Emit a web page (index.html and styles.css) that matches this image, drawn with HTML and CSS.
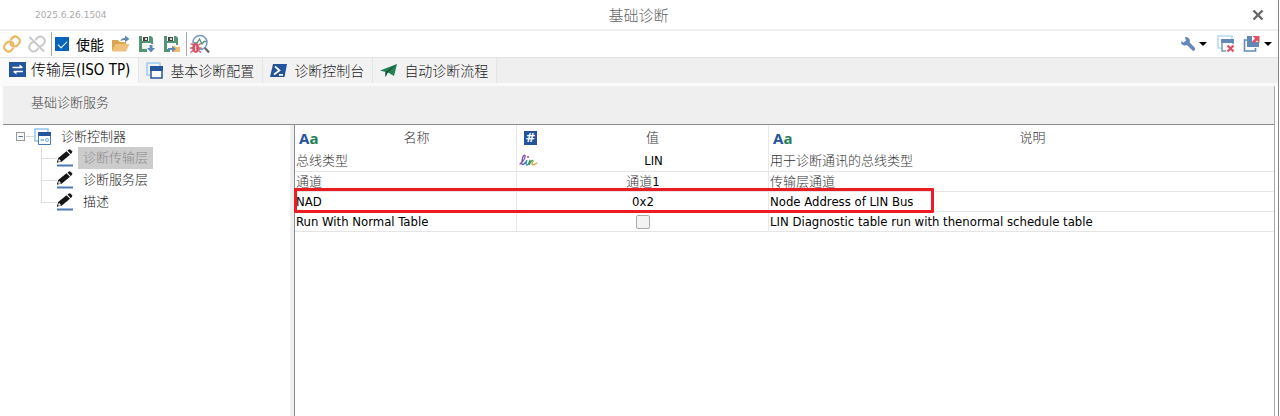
FILE: index.html
```html
<!DOCTYPE html>
<html lang="zh-CN">
<head>
<meta charset="utf-8">
<title>基础诊断</title>
<link rel="stylesheet" href="styles.css">
</head>
<body>
<svg class="defs" aria-hidden="true">
  <symbol id="pencil" viewBox="0 0 18 18">
    <path d="M1 13.500 2.200 9 10.500 2.200 14 5.800 5.600 12.800Z" fill="#151515"/>
    <path d="M11.500 1.600 13 .4Q14 0 15 1L16 2.200Q16.500 3.200 15.600 4.200L14.600 5.100Z" fill="#151515"/>
    <path d="M2.900 9.700 5.200 12.200 2 13Z" fill="#fff"/>
    <path d="M1 13.500 1.500 11.700 2.700 13Z" fill="#151515"/>
    <path d="M1 16.500H17" stroke="#4a79b5" stroke-width="2"/>
  </symbol>
</svg>
<div class="window">
  <header class="titlebar">
    <span class="version">2025.6.26.1504</span>
    <h1 class="title">基础诊断</h1>
    <button class="close" aria-label="关闭"><svg width="12" height="12" viewBox="0 0 12 12"><path d="M1.500 1.500 10.500 10.500M10.500 1.500 1.500 10.500" stroke="#666" stroke-width="2.400"/></svg></button>
  </header>

  <div class="toolbar">
    <button class="tool" aria-label="连接"><svg width="18" height="18" viewBox="0 0 18 18" fill="none" stroke="#ebb65e" stroke-width="2.100" stroke-linecap="round"><path d="M8 4.500Q10.500 .300 14 1.800 18.500 4.500 16 8.500 13.500 12.500 9.500 11.200 6.500 9.500 8 7.500"/><path d="M10 13.500Q7.500 17.700 4 16.200-.500 13.500 2 9.500 4.500 5.500 8.500 6.800 11.500 8.500 10 10.500"/></svg></button>
    <button class="tool" aria-label="断开"><svg width="18" height="18" viewBox="0 0 18 18" fill="none" stroke="#c9c9c9" stroke-width="2" stroke-linecap="round"><path d="M8 4.500Q10.500 .500 14 1.800 18.500 4.500 16 8.500 14.500 10.800 12.500 11"/><path d="M10 13.500Q7.500 17.500 4 16.200-.500 13.500 2 9.500 3.500 7.200 5.500 7M2 2.500 15.500 16"/></svg></button>
    <span class="divider"></span>
    <label class="enable"><input type="checkbox" class="check" checked>使能</label>
    <button class="tool" aria-label="打开"><svg width="20" height="18" viewBox="0 0 20 18"><path d="M1 16V5H7L9 7H15V10H5Z" fill="#d9a550"/><path d="M4.500 9H18.500L15 16.500H1Z" fill="#efc078"/><path d="M9.500 6Q10 3 14 3V.500L18.500 4 14 7.200V5Q11.500 5 9.500 6Z" fill="#6187b6"/></svg></button>
    <button class="tool" aria-label="保存"><svg width="18" height="18" viewBox="0 0 18 18"><path d="M1 1H13L15 3V9H13V8H4V14H9V17H1Z" fill="#529475"/><path d="M4 1H11V6H4Z" fill="#fff"/><path d="M5 2H10V6H5Z" fill="#444"/><path d="M7 3H9V5H7Z" fill="#ddd"/><path d="M4 10H10M4 13H9" stroke="#cfe2d8"/><path d="M11.500 10H14.500V13H17L13 17.500 9 13H11.500Z" fill="#5c87bd"/></svg></button>
    <button class="tool" aria-label="另存为"><svg width="18" height="18" viewBox="0 0 18 18"><path d="M1 1H13L15 3V10H13V8H4V14H7V17H1Z" fill="#529475"/><path d="M4 1H11V6H4Z" fill="#fff"/><path d="M5 2H10V6H5Z" fill="#444"/><path d="M7 3H9V5H7Z" fill="#ddd"/><path d="M9 11H12L13 12H17V17H9Z" fill="#edbd70"/><path d="M5 13H9V11L13 14 9 17V15H5Z" fill="#5c87bd"/></svg></button>
    <span class="divider"></span>
    <button class="tool" aria-label="诊断分析"><svg width="20" height="20" viewBox="0 0 20 20" fill="none"><circle cx="10" cy="8.500" r="7" stroke="#7596bf" stroke-width="1.500"/><path d="M4 9 7 9 9.500 5 12 10 14 7.500H16" stroke="#529475" stroke-width="1.300"/><path d="M15 14 19 18.500" stroke="#666" stroke-width="2.200"/><path d="M.500 9.500 3 11M11 9.500 8.500 11M0 14H11.500M.500 18.500 3 16.500M11 18.500 8.500 16.500" stroke="#dc5263" stroke-width="1.300"/><ellipse cx="5.700" cy="14" rx="3.500" ry="5" fill="#dc5263"/><path d="M5.700 11.500V17" stroke="#fff"/></svg></button>
    <span class="spacer"></span>
    <button class="tool menu" aria-label="工具"><svg width="16" height="16" viewBox="0 0 16 16"><path d="M5 1Q9 .500 10 4.500L9.700 6.500 15 12Q15.500 14.500 13 15L7 9Q4 10.500 1.500 8L1 5 3.500 6.500 6 4.500Z" fill="#6289b9"/></svg><i class="caret"></i></button>
    <button class="tool window-close" aria-label="关闭窗口"><svg width="18" height="18" viewBox="0 0 18 18" fill="none"><path d="M4 13H1V1H15V4" stroke="#b9d7f0" stroke-width="1.500"/><path d="M5 5H16V16H5Z" stroke="#7895bb" stroke-width="1.500"/><path d="M4 4H17V8H4Z" fill="#6289b9"/><path d="M9 9H18V18H9Z" fill="#fff"/><path d="M10.500 10.500 16.500 16.500M16.500 10.500 10.500 16.500" stroke="#df5264" stroke-width="2.300"/></svg></button>
    <button class="tool menu" aria-label="弹出窗口"><svg width="18" height="18" viewBox="0 0 18 18"><path d="M4 5H1.500V16H12.500V13" fill="none" stroke="#6289b9" stroke-width="1.600"/><path d="M4 1H9V7H16V12H4Z" fill="#6289b9"/><path d="M9.500 1H16.500V8L14 5.500 11 8.500 9 6.500 12 3.500Z" fill="#df5264"/></svg><i class="caret"></i></button>
  </div>

  <nav class="tabs" role="tablist">
    <button class="tab active" role="tab" aria-selected="true"><svg width="18" height="16" viewBox="0 0 18 16"><path d="M0 0H17V15H0Z" fill="#24559c"/><path d="M3.500 5.500H13M5 9.500H14" stroke="#fff" stroke-width="1.500"/><path d="M10.500 2.500 14.500 5.500H10.500ZM7.500 12.500 3.500 9.500H7.500Z" fill="#fff"/></svg>传输层(ISO TP)</button>
    <button class="tab" role="tab"><svg width="18" height="18" viewBox="0 0 18 18" fill="none"><path d="M4 13H1V1H14V4" stroke="#9acbf4" stroke-width="1.500"/><path d="M5 5H16V16H5Z" fill="#fff" stroke="#24559c" stroke-width="1.500"/><path d="M4 4H17V9H4Z" fill="#24559c"/></svg>基本诊断配置</button>
    <button class="tab" role="tab"><svg width="18" height="14" viewBox="0 0 18 14" fill="none"><path d="M3 0H17L14.500 13H0Z" fill="#24559c"/><path d="M5 2.500 9.500 6.500 4 10.500M9 10.800H13" stroke="#fff" stroke-width="1.700"/></svg>诊断控制台</button>
    <button class="tab" role="tab"><svg width="18" height="14" viewBox="0 0 18 14"><path d="M0 6.500 17 0 14 12 8 8.500 5.500 13V8Z" fill="#258052"/><path d="M5.500 8 17 0 7.500 8.500 5.500 13Z" fill="#174b34"/></svg>自动诊断流程</button>
  </nav>

  <section class="panel">
    <h2 class="service">基础诊断服务</h2>
    <div class="content">
      <aside class="tree">
        <div class="root"><svg class="expander" width="18" height="18" viewBox="0 0 18 18" fill="none"><path d="M9.500 8.500H18" stroke="#d4d4d4"/><rect x=".5" y="4.500" width="8" height="8" fill="#f7f7f7" stroke="#999"/><path d="M2.500 8.500H7" stroke="#5673a4"/></svg><svg class="root-icon" width="18" height="18" viewBox="0 0 18 18" fill="none"><path d="M4 13H1V1H14V4" stroke="#8fc3ee" stroke-width="1.500"/><path d="M4.500 5H16.500V16.500H4.500Z" fill="#fff" stroke="#4778b6"/><path d="M4 4H17V8H4Z" fill="#24559c"/><path d="M6.500 12H10" stroke="#70afe5" stroke-width="1.500"/><circle cx="13" cy="12" r="1.500" stroke="#70afe5"/></svg>诊断控制器</div>
        <ul class="branch">
          <li><svg class="pencil"><use href="#pencil"/></svg><span class="node selected">诊断传输层</span></li>
          <li><svg class="pencil"><use href="#pencil"/></svg><span class="node">诊断服务层</span></li>
          <li><svg class="pencil"><use href="#pencil"/></svg><span class="node">描述</span></li>
        </ul>
      </aside>
      <div class="grid">
        <table>
          <colgroup><col class="col-name"><col class="col-value"><col></colgroup>
          <thead>
            <tr>
              <th><div class="cell head"><b class="aa">A<em>a</em></b><span>名称</span></div></th>
              <th><div class="cell head"><b class="hash">#</b><span>值</span></div></th>
              <th><div class="cell head"><b class="aa">A<em>a</em></b><span>说明</span></div></th>
            </tr>
          </thead>
          <tbody>
            <tr class="tall"><td class="cjk">总线类型</td><td><div class="cell"><svg class="lin" width="20" height="14" viewBox="0 0 20 14" fill="none" stroke-width="1.300" stroke-linecap="round"><path d="M1 10Q7 5 6 1.500 4 0 3 7 2 13 6 9" stroke="#7651ac"/><path d="M6 9 8 6Q6 11 8 11 9 11 10 9" stroke="#308fc5"/><circle cx="9" cy="3" r="1" fill="#d33348"/><path d="M10 9 11 6 10 11Q13 5 14 7" stroke="#3b9b52"/><path d="M14 7Q12 11 14 11L18 9" stroke="#d6a93e"/></svg><span>LIN</span></div></td><td class="cjk">用于诊断通讯的总线类型</td></tr>
            <tr><td class="cjk">通道</td><td class="value cjk">通道<span class="digit">1</span></td><td class="cjk">传输层通道</td></tr>
            <tr><td>NAD</td><td class="value">0x2</td><td>Node Address of LIN Bus</td></tr>
            <tr><td>Run With Normal Table</td><td class="value"><input type="checkbox" class="box" aria-label="Run With Normal Table"></td><td>LIN Diagnostic table run with thenormal schedule table</td></tr>
          </tbody>
        </table>
        <div class="highlight"></div>
      </div>
    </div>
  </section>
</div>
</body>
</html>
```
FILE: styles.css
```css
* { box-sizing: border-box; }
body {
  margin: 0;
  background: #fff;
  color: #000;
  font: 13px/18px "DejaVu Sans Condensed", "Noto Sans CJK SC", sans-serif;
}
button { border: 0; padding: 0; background: none; color: inherit; font: inherit; }
h1, h2 { margin: 0; font-weight: 300; }
svg { display: block; flex: none; }
.defs { position: absolute; width: 0; height: 0; }
.window {
  display: flex;
  flex-direction: column;
  min-height: 100vh;
  margin-right: 1px;
  border-right: 1px solid #858585;
}
.titlebar {
  display: grid;
  grid-template-columns: 1fr auto 1fr;
  align-items: center;
  height: 31px;
  padding: 0 14px 0 35px;
  border-bottom: 2px solid #efefef;
}
.version { color: #aaa; font: 9px/12px "DejaVu Sans", sans-serif; }
.title { padding-right: 22px; color: #666; font: 300 15px/22px "Noto Sans CJK SC", sans-serif; }
.close { justify-self: end; }
.toolbar {
  display: flex;
  align-items: center;
  gap: 7px;
  height: 27px;
  padding: 0 6px 0 3px;
  border-bottom: 1px solid #e3e3e3;
}
.tool { display: flex; align-items: center; }
.menu { gap: 3px; }
.divider { width: 1px; height: 24px; margin: 0 -4px 0 -2px; background: #aaa; }
.enable { display: flex; align-items: center; gap: 7px; font: 14px/20px "Noto Sans CJK SC", sans-serif; }
.check, .box { appearance: none; margin: 0; }
.check {
  width: 14px;
  height: 14px;
  background: #0764bd;
}
.check:checked::before {
  content: "";
  display: block;
  width: 8px;
  height: 4px;
  margin: 4px 3px;
  border: solid #fff;
  border-width: 0 0 1px 1px;
  transform: rotate(-45deg);
}
.spacer { flex: 1; }
.window-close { margin: 0 1px 0 3px; }
.caret { border: 4px solid transparent; border-top: 4px solid #000; border-bottom: 0; }
.tabs {
  display: flex;
  align-items: flex-start;
  height: 28px;
  background: #efefef;
  border-bottom: 3px solid #fafafa;
}
.tab {
  display: flex;
  align-items: center;
  gap: 6px;
  height: 25px;
  padding: 0 8px 0 7px;
  border-right: 1px solid #e5e5e5;
  background: #f2f2f2;
  color: #222;
  font-size: 14px;
  font-weight: 300;
}
.tab.active { gap: 4px; padding: 0 8px 2px 9px; background: #fafafa; color: #000; font-size: 15px; }
.panel {
  flex: 1;
  display: flex;
  flex-direction: column;
  margin: 0 3px;
  border-right: 1px solid #aaa;
}
.service {
  height: 39px;
  padding: 8px 28px;
  border-bottom: 1px solid #8d8d8d;
  background: #efefef;
  color: #444;
  font-size: 13px;
}
.content { flex: 1; display: grid; grid-template-columns: 291px 1fr; }
.tree { padding: 2px 0 0 13px; border-right: 4px solid #efefef; font-weight: 300; color: #222; }
.root { display: flex; align-items: center; height: 20px; }
.root-icon { margin-right: 9px; }
.branch { margin: 0 0 0 25px; padding: 0; list-style: none; }
.branch li { position: relative; display: flex; align-items: center; height: 22px; padding-left: 15px; }
.branch li::before {
  content: "";
  position: absolute;
  left: 0;
  top: 0;
  width: 15px;
  height: 11px;
  border-left: 1px solid #ddd;
  border-bottom: 1px solid #ddd;
}
.branch li:not(:last-child)::after {
  content: "";
  position: absolute;
  left: 0;
  top: 11px;
  height: 11px;
  border-left: 1px solid #ddd;
}
.pencil { width: 18px; height: 18px; margin-right: 4px; }
.node { padding: 2px 5px; }
.selected { background: #ccc; color: #8b8b8b; }
.grid { position: relative; border-left: 1px solid #8c8c96; }
table { width: 100%; table-layout: fixed; border-collapse: separate; border-spacing: 0; }
.col-name { width: 222px; }
.col-value { width: 252px; }
th, td {
  height: 20px;
  padding: 0 0 0 1px;
  border-right: 1px solid #e8e8e8;
  border-bottom: 1px solid #e4e4e4;
  text-align: left;
  line-height: 18px;
  white-space: nowrap;
}
th:last-child, td:last-child { border-right: 0; }
th { height: 25px; border-bottom: 0; font-weight: 300; }
.tall td { height: 22px; }
.cjk { color: #333; font-weight: 300; }
.digit { color: #000; }
.cell { display: flex; align-items: center; }
.cell span { flex: 1; text-align: center; }
.head { padding-left: 3px; color: #333; }
.aa { width: 18px; color: #24559c; font: bold 15px/16px "Noto Sans", sans-serif; }
.aa em { color: #238052; font-style: normal; }
.hash {
  width: 13px;
  margin-left: 3px;
  background: #24559c;
  color: #fff;
  font: bold 12px/14px "DejaVu Sans", sans-serif;
  text-align: center;
}
.lin { margin-left: 1px; }
.value { text-align: center; }
.box {
  display: block;
  width: 14px;
  height: 14px;
  margin: 0 auto;
  border: 1px solid #aaa;
  border-radius: 2px;
  background: #f3f3f3;
}
.highlight {
  position: absolute;
  left: -1px;
  top: 63px;
  width: 640px;
  height: 25px;
  border: 3px solid #ed1c24;
  border-radius: 1px;
}
```
